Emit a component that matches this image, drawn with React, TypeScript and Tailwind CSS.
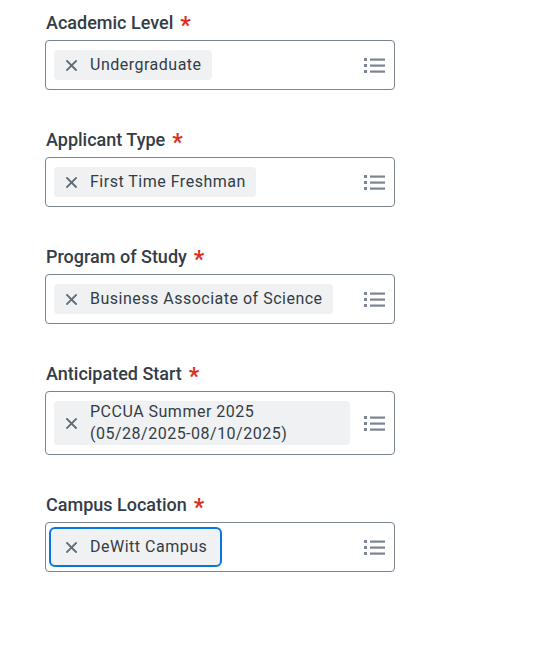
import React from "react";

const ListIcon = () => (
  <svg width="21" height="16" viewBox="0 0 21 16" className="shrink-0">
    <rect x="0" y="1" width="3" height="3" fill="#7b858f" />
    <rect x="0" y="7" width="3" height="3" fill="#7b858f" />
    <rect x="0" y="13" width="3" height="3" fill="#7b858f" />
    <rect x="6" y="1.5" width="15" height="2.2" fill="#7b858f" />
    <rect x="6" y="7.5" width="15" height="2.2" fill="#7b858f" />
    <rect x="6" y="13.5" width="15" height="2.2" fill="#7b858f" />
  </svg>
);

const XIcon = () => (
  <svg width="11" height="11" viewBox="0 0 11 11" className="shrink-0">
    <path d="M1 1 L10 10 M10 1 L1 10" stroke="#5f6b77" strokeWidth="1.8" strokeLinecap="square" />
  </svg>
);

type Field = { label: string; value: string; focused?: boolean };

const fields: Field[] = [
  { label: "Academic Level", value: "Undergraduate" },
  { label: "Applicant Type", value: "First Time Freshman" },
  { label: "Program of Study", value: "Business Associate of Science" },
  { label: "Anticipated Start", value: "PCCUA Summer 2025 (05/28/2025-08/10/2025)" },
  { label: "Campus Location", value: "DeWitt Campus", focused: true },
];

const Chip = ({ value, focused }: { value: string; focused?: boolean }) =>
  focused ? (
    <div className="-m-[5px] inline-flex min-h-[40px] max-w-full items-center rounded-[6px] border-2 border-[#0875e1] bg-[#f0f1f2] py-[4px] pl-[15px] pr-[13px]">
      <XIcon />
      <span className="ml-[13px] text-[16px] leading-[22px] tracking-[0.5px] text-[#333d47]">{value}</span>
    </div>
  ) : (
    <div className="inline-flex min-h-[30px] max-w-full items-center rounded-[4px] bg-[#f0f1f2] py-0 pl-[12px] pr-[10px]">
      <XIcon />
      <span className="ml-[13px] text-[16px] leading-[22px] tracking-[0.5px] text-[#333d47]">{value}</span>
    </div>
  );

export default function App() {
  return (
    <div
      className="min-h-[653px] w-[546px] bg-white pl-[45px] pt-[9px]"
      style={{ fontFamily: "Roboto, 'Noto Sans', sans-serif" }}
    >
      {fields.map((f, i) => (
        <div key={f.label} className={i === 0 ? "" : "mt-[36px]"}>
          <div className="flex h-[27px] items-center text-[18px] font-medium leading-[27px] text-[#333d47]">
            <span className="pl-px">{f.label}</span>
            <span className="ml-[7px] pt-[6px] text-[23px] font-bold leading-[21px] text-[#de2e21]">*</span>
          </div>
          <div className="mt-[4px] flex w-[350px] items-center rounded-[4px] border border-[#7b858f] py-[9px] pl-[8px] pr-[9px]">
            <div className="flex min-w-0 flex-1">
              <Chip value={f.value} focused={f.focused} />
            </div>
            <div className="ml-[14px]">
              <ListIcon />
            </div>
          </div>
        </div>
      ))}
    </div>
  );
}
